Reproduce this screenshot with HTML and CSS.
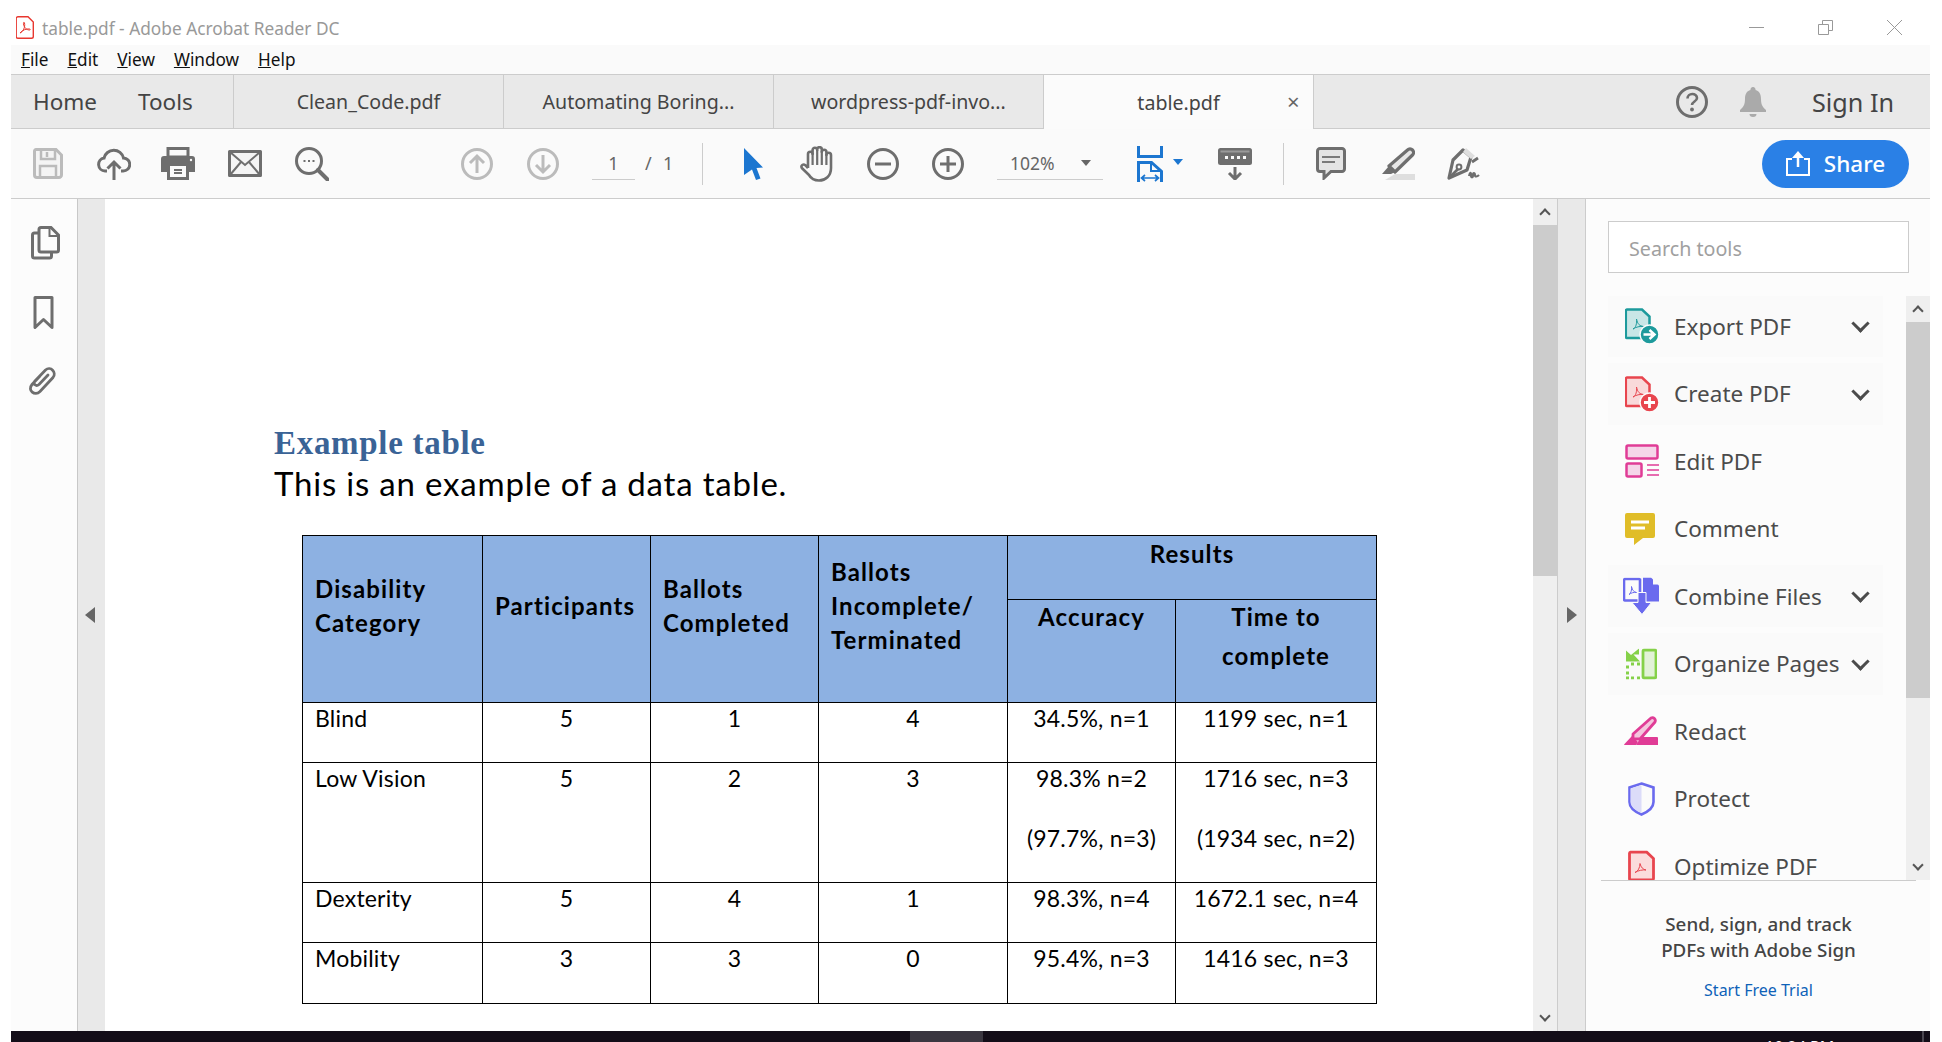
FILE: index.html
```html
<!DOCTYPE html>
<html lang="en">
<head>
  <meta charset="UTF-8">
  <title>table.pdf - Adobe Acrobat Reader DC</title>
  <link rel="stylesheet" href="styles.css">
</head>
<body>
<div class="app">

  <div class="titlebar">
    <svg class="pdf-icon" width="18" height="23" viewBox="0 0 18 23"><path d="M2 .7h10l5.3 5.3v14.5a1.8 1.8 0 0 1-1.8 1.8h-13.5a1.8 1.8 0 0 1-1.8-1.8v-18a1.8 1.8 0 0 1 1.8-1.8z" fill="#fff" stroke="#e8372f" stroke-width="1.4"/><path d="M4 17c3-1 5.5-6 4.5-10-.5-1.5-1.2-.5-1 1 .5 3.5 3 6 6 6 1 0 1-1 0-1-3-.5-7 1-9.5 4z" fill="none" stroke="#e8372f"/></svg>
    <span class="title-text">table.pdf - Adobe Acrobat Reader DC</span>
    <div class="win-btns">
      <svg width="15" height="15" viewBox="0 0 15 15"><path d="M0 7.5h15" stroke="#999" fill="none"/></svg>
      <svg width="15" height="15" viewBox="0 0 15 15"><path d="M.5 4.5h10v10h-10zM4.5 4.5v-4h10v10h-4" stroke="#999" fill="none"/></svg>
      <svg width="15" height="15" viewBox="0 0 15 15"><path d="M0 0l15 15M15 0L0 15" stroke="#999" fill="none"/></svg>
    </div>
  </div>

  <div class="menubar">
    <span><u>F</u>ile</span>
    <span><u>E</u>dit</span>
    <span><u>V</u>iew</span>
    <span><u>W</u>indow</span>
    <span><u>H</u>elp</span>
  </div>

  <div class="tabs">
    <div class="nav">
      <span>Home</span>
      <span>Tools</span>
    </div>
    <div class="tab">Clean_Code.pdf</div>
    <div class="tab">Automating Boring...</div>
    <div class="tab">wordpress-pdf-invo...</div>
    <div class="tab active">table.pdf<span class="tab-close">×</span></div>
    <div class="tabs-right">
      <svg width="32" height="32" viewBox="0 0 32 32"><circle cx="16" cy="16" r="14.5" fill="none" stroke="#6e6e6e" stroke-width="3"/><path d="M11.5 12.5c0-6 9.5-6 9.5-.5 0 3.5-5 3.5-5 7" fill="none" stroke="#6e6e6e" stroke-width="2.6"/><circle cx="16" cy="23.5" r="1.9" fill="#6e6e6e"/></svg>
      <svg class="bell" width="26" height="30" viewBox="0 0 26 30"><path d="M13 0a2.5 2.5 0 0 1 2.5 3c4 1 5.5 4.5 5.5 9 0 6 2 8.5 5 11v2H0v-2c3-2.5 5-5 5-11 0-4.5 1.5-8 5.5-9A2.5 2.5 0 0 1 13 0z" fill="#aaa"/><path d="M9.5 27h7a3.5 3 0 0 1-7 0z" fill="#aaa"/></svg>
      <span class="signin">Sign In</span>
    </div>
  </div>

  <div class="toolbar">
    <!-- save -->
    <svg width="30" height="31" viewBox="0 0 30 31"><path d="M3 1.5h20l5.5 5.5v20a2.5 2.5 0 0 1-2.5 2.5H4a2.5 2.5 0 0 1-2.5-2.5V3A1.5 1.5 0 0 1 3 1.5z" fill="#f4f4f4" stroke="#bbb" stroke-width="3"/><path d="M8 2v9h14V2M14 4v5M7 29V18h16v11" fill="none" stroke="#bbb" stroke-width="2.5"/></svg>
    <!-- upload to cloud -->
    <svg width="34" height="33" viewBox="0 0 34 33"><path d="M10 24H8A6.5 6.5 0 0 1 7 11.1 10 10 0 0 1 26.5 11 6.5 6.5 0 0 1 26 24h-2" fill="none" stroke="#6e6e6e" stroke-width="3"/><path d="M17 33V15M10.5 21.5L17 15l6.5 6.5" fill="none" stroke="#6e6e6e" stroke-width="3"/></svg>
    <!-- print -->
    <svg width="34" height="33" viewBox="0 0 34 33"><path d="M7 1.5h20V10H7z" fill="none" stroke="#6e6e6e" stroke-width="3"/><path d="M3 9h28a3 3 0 0 1 3 3v13h-6v8H6v-8H0V12a3 3 0 0 1 3-3z" fill="#6e6e6e"/><path d="M9 19h16v11H9z" fill="#fafafa"/><path d="M13 23h8M13 26h8" stroke="#6e6e6e" stroke-width="2"/><circle cx="30" cy="13" r="1.2" fill="#fafafa"/></svg>
    <!-- mail -->
    <svg width="34" height="27" viewBox="0 0 34 27"><path d="M1.5 1.5h31v24h-31z" fill="#f4f4f4" stroke="#6e6e6e" stroke-width="3" stroke-linejoin="round"/><path d="M2 2l15 13L32 2M2 25l11-13M32 25L21 12" fill="none" stroke="#6e6e6e" stroke-width="2"/></svg>
    <!-- search -->
    <svg width="34" height="34" viewBox="0 0 34 34"><circle cx="14" cy="14" r="12.5" fill="none" stroke="#6e6e6e" stroke-width="3"/><path d="M23 23l9.5 9.5" stroke="#6e6e6e" stroke-width="4" stroke-linecap="round"/><path d="M8.5 14h2M13 14h2M17.5 14h2" stroke="#6e6e6e" stroke-width="2"/></svg>
    <span></span>
    <!-- previous page -->
    <svg width="32" height="32" viewBox="0 0 32 32"><circle cx="16" cy="16" r="14.5" fill="none" stroke="#bbb" stroke-width="3"/><path d="M16 25V8M9 15l7-7 7 7" fill="none" stroke="#bbb" stroke-width="3"/></svg>
    <!-- next page -->
    <svg width="32" height="32" viewBox="0 0 32 32"><circle cx="16" cy="16" r="14.5" fill="none" stroke="#bbb" stroke-width="3"/><path d="M16 7v17M9 17l7 7 7-7" fill="none" stroke="#bbb" stroke-width="3"/></svg>

    <div class="pager">
      <span class="page-input">1</span>
      <span class="page-total">/ &nbsp;1</span>
    </div>
    <span class="tb-sep"></span>

    <!-- select -->
    <svg class="tb-select" width="20" height="32" viewBox="0 0 20 32"><path d="M0 0l19 19.5-6.5.5 4 10.5-4.5 1.5-4-10.5L0 27z" fill="#1c76d0"/></svg>
    <!-- hand -->
    <svg width="34" height="36" viewBox="0 0 34 36"><path d="M8 22V8a2.3 2.3 0 0 1 4.6 0V4a2.3 2.3 0 0 1 4.6 0v-.5a2.3 2.3 0 0 1 4.6 0V6a2.3 2.3 0 0 1 4.6 0V9a2.3 2.3 0 0 1 4.6 0v13c0 8-5.5 12.5-12 12.5-5 0-8-2-10-5.5L1.8 22c-1.3-2.5 1.500-4.500 3.500-2.800L8 22" fill="none" stroke="#6e6e6e" stroke-width="2.6" stroke-linejoin="round"/><path d="M12.6 7v12M17.2 4v15M21.8 5v14M26.4 8v11" fill="none" stroke="#6e6e6e" stroke-width="2.2"/></svg>
    <!-- zoom out -->
    <svg width="32" height="32" viewBox="0 0 32 32"><circle cx="16" cy="16" r="14.5" fill="none" stroke="#6e6e6e" stroke-width="3"/><path d="M8 16h16" stroke="#6e6e6e" stroke-width="3"/></svg>
    <!-- zoom in -->
    <svg width="32" height="32" viewBox="0 0 32 32"><circle cx="16" cy="16" r="14.5" fill="none" stroke="#6e6e6e" stroke-width="3"/><path d="M8 16h16M16 8v16" stroke="#6e6e6e" stroke-width="3"/></svg>

    <div class="zoom-box">
      <span>102%</span>
      <i class="caret"></i>
    </div>

    <!-- fit width -->
    <div class="fit">
      <svg width="26" height="36" viewBox="0 0 26 36"><path d="M1.5 0v10.5h23V0M1.5 36V16.5h13l10 9V36" fill="none" stroke="#1c76d0" stroke-width="3"/><path d="M14 16v9h10" fill="none" stroke="#1c76d0" stroke-width="2"/><path d="M5 32h16M8 29l-3.5 3L8 35M18 29l3.5 3-3.5 3" fill="none" stroke="#1c76d0" stroke-width="1.7"/></svg>
      <i class="caret blue"></i>
    </div>

    <!-- read mode -->
    <svg width="34" height="32" viewBox="0 0 34 32"><rect y="0" width="34" height="17" rx="2.5" fill="#6e6e6e"/><path d="M2.5 2.5h29v2h-29z" fill="#9a9a9a"/><path d="M7 8h3v3H7zM13 8h3v3h-3zM19 8h3v3h-3zM25 8h3v3h-3z" fill="#fafafa"/><path d="M17 19v12M11 25l6 6 6-6" fill="none" stroke="#6e6e6e" stroke-width="3"/></svg>
    <span class="tb-sep"></span>

    <!-- comment -->
    <svg width="30" height="33" viewBox="0 0 30 33"><path d="M4 1.5h22a2.5 2.5 0 0 1 2.5 2.5v18a2.5 2.5 0 0 1-2.5 2.5H15L8 31v-6.5H4A2.5 2.5 0 0 1 1.5 22V4A2.5 2.5 0 0 1 4 1.5z" fill="#e4e4e4" stroke="#6e6e6e" stroke-width="3"/><path d="M6 10h18M6 15h13" stroke="#7a7a7a" stroke-width="1.8"/></svg>
    <!-- highlight -->
    <svg width="34" height="33" viewBox="0 0 34 33"><path d="M26.5 3a3.5 3.5 0 0 1 5 5L14 25l-6-6z" fill="#e6e6e6" stroke="#6e6e6e" stroke-width="3.2" stroke-linejoin="round"/><path d="M8 19l-7 8h9l4-2" fill="#6e6e6e"/><path d="M14 27h20v6H4z" fill="#dedede"/></svg>
    <!-- sign -->
    <svg width="34" height="33" viewBox="0 0 34 33"><path d="M16 3l8 7-4 13L2 31l4-18z" fill="none" stroke="#6e6e6e" stroke-width="3.2" stroke-linejoin="round"/><path d="M19 1l9 8-4 3-8-7z" fill="#dedede"/><path d="M3 30l8-8M25 15l6-4" stroke="#6e6e6e" stroke-width="2.8"/><circle cx="12" cy="20" r="2.4" fill="none" stroke="#6e6e6e" stroke-width="2"/><path d="M22 29c1-4 2-4 2-1s2 3 2 0 2-2 2 0 2 2 4 0" fill="none" stroke="#6e6e6e" stroke-width="2.2"/></svg>

    <button class="share">
      <svg width="24" height="25" viewBox="0 0 24 25"><path d="M6 8H1v16h22V8h-5" fill="none" stroke="#fff" stroke-width="2"/><path d="M12 16V3" stroke="#fff" stroke-width="2.5"/><path d="M6 7l6-7 6 7z" fill="#fff"/></svg>
      <span>Share</span>
    </button>
  </div>

  <div class="main">
    <div class="side-icons">
      <svg class="side-pages" width="29" height="34" viewBox="0 0 29 34"><path d="M8 7H3.5A2 2 0 0 0 1.5 9v21a2 2 0 0 0 2 2h15a2 2 0 0 0 2-2v-3" fill="none" stroke="#6e6e6e" stroke-width="3"/><path d="M10 1.5h10l7.5 7.5v15a2 2 0 0 1-2 2H10a2 2 0 0 1-2-2V3.5a2 2 0 0 1 2-2z" fill="#fcfcfc" stroke="#6e6e6e" stroke-width="3"/><path d="M18.5 2v8h8.5" fill="none" stroke="#6e6e6e" stroke-width="2"/></svg>
      <svg class="side-bookmark" width="21" height="34" viewBox="0 0 21 34"><path d="M2 1.5h17v30l-8.5-8-8.500 8z" fill="none" stroke="#6e6e6e" stroke-width="3" stroke-linejoin="round"/></svg>
      <svg class="side-clip" width="29" height="31" viewBox="0 0 29 31"><path d="M13 11L5 19.5c-5 6 3 12 8 7L26 12.5c4-5-2.5-12-7.5-7.5L8 16c-2.5 3 1 6 4 3.5l9-9.5" fill="none" stroke="#6e6e6e" stroke-width="2.8" stroke-linecap="round"/></svg>
    </div>

    <div class="strip">
      <i class="arrow-left"></i>
    </div>

    <div class="page">
      <h1>Example table</h1>
      <p class="intro">This is an example of a data table.</p>
      <table class="data">
        <colgroup>
          <col class="c1"><col class="c2"><col class="c3"><col class="c4"><col class="c5"><col class="c6">
        </colgroup>
        <tr class="head-a">
          <th rowspan="2" class="side">Disability<br>Category</th>
          <th rowspan="2" class="side">Participants</th>
          <th rowspan="2" class="side">Ballots<br>Completed</th>
          <th rowspan="2" class="side">Ballots<br>Incomplete/<br>Terminated</th>
          <th colspan="2" class="results">Results</th>
        </tr>
        <tr class="head-b">
          <th>Accuracy</th>
          <th>Time to<div class="line2">complete</div></th>
        </tr>
        <tr class="r60">
          <td class="left">Blind</td><td>5</td><td>1</td><td>4</td><td>34.5%, n=1</td><td>1199 sec, n=1</td>
        </tr>
        <tr class="r120">
          <td class="left">Low Vision</td><td>5</td><td>2</td><td>3</td>
          <td>98.3% n=2<div class="para">(97.7%, n=3)</div></td>
          <td>1716 sec, n=3<div class="para">(1934 sec, n=2)</div></td>
        </tr>
        <tr class="r60">
          <td class="left">Dexterity</td><td>5</td><td>4</td><td>1</td><td>98.3%, n=4</td><td>1672.1 sec, n=4</td>
        </tr>
        <tr class="r61">
          <td class="left">Mobility</td><td>3</td><td>3</td><td>0</td><td>95.4%, n=3</td><td>1416 sec, n=3</td>
        </tr>
      </table>
    </div>

    <div class="scroll doc-scroll">
      <div class="sb-btn"><i class="chev up"></i></div>
      <div class="sb-thumb doc-thumb"></div>
      <div class="sb-btn sb-end"><i class="chev down"></i></div>
    </div>

    <div class="strip strip-right">
      <i class="arrow-right"></i>
    </div>

    <div class="panel">
      <div class="search">Search tools</div>

      <div class="list-wrap">
        <div class="tool-list">
          <div class="tool menu">
            <svg width="34" height="36" viewBox="0 0 34 36"><path d="M2 1.5h15l7.5 7v20a1.5 1.5 0 0 1-1.5 1.5H2A1.5 1.5 0 0 1 .8 28.5V3A1.5 1.5 0 0 1 2 1.5z" fill="#c9e6e6" stroke="#1d9a9c" stroke-width="2.5"/><path d="M8 21c3-1 4-6 3.5-10 1 5 3 7 7 7.5-3-.5-8 .5-10.5 2.5z" fill="none" stroke="#1d9a9c"/><circle cx="24.5" cy="26.5" r="9.5" fill="#1d9a9c" stroke="#fbfbfb" stroke-width="1.5"/><path d="M18.5 26.5h9M24.5 22l5 4.5-5 4.5" fill="none" stroke="#fff" stroke-width="2.5"/></svg>
            <span>Export PDF</span><i class="chevron"></i>
          </div>
          <div class="tool menu">
            <svg width="34" height="36" viewBox="0 0 34 36"><path d="M2 1.5h15l7.5 7v20a1.5 1.5 0 0 1-1.5 1.5H2A1.5 1.5 0 0 1 .8 28.5V3A1.5 1.5 0 0 1 2 1.5z" fill="#f9d9da" stroke="#e8454e" stroke-width="2.5"/><path d="M8 21c3-1 4-6 3.5-10 1 5 3 7 7 7.5-3-.5-8 .5-10.5 2.5z" fill="none" stroke="#e8454e"/><circle cx="24.5" cy="26.5" r="9.5" fill="#e8454e" stroke="#fbfbfb" stroke-width="1.5"/><path d="M19 26.5h11M24.5 21v11" fill="none" stroke="#fff" stroke-width="2.8"/></svg>
            <span>Create PDF</span><i class="chevron"></i>
          </div>
          <div class="tool">
            <svg width="34" height="34" viewBox="0 0 34 34"><rect x="1.5" y="1.5" width="31" height="13" rx="1.5" fill="#f5d5e9" stroke="#e03c96" stroke-width="2.5"/><rect x="1.5" y="19.5" width="15" height="13" rx="1.5" fill="#f5d5e9" stroke="#e03c96" stroke-width="2.5"/><path d="M22 21h12M22 26h12M22 31h12" stroke="#e03c96" stroke-width="1.6"/></svg>
            <span>Edit PDF</span>
          </div>
          <div class="tool">
            <svg width="30" height="32" viewBox="0 0 30 32"><path d="M2 0h26a2 2 0 0 1 2 2v21a2 2 0 0 1-2 2H18L9 32v-7H2a2 2 0 0 1-2-2V2a2 2 0 0 1 2-2z" fill="#e0bd28"/><path d="M6 9h18M6 15h14" stroke="#fff" stroke-width="2.8"/></svg>
            <span>Comment</span>
          </div>
          <div class="tool menu">
            <svg class="ic-wide" width="36" height="37" viewBox="0 0 36 37"><path d="M2 1.5h14l1 .5v21H2a1.2 1.2 0 0 1-1-1.5V3a1.5 1.5 0 0 1 1-1.5z" fill="#fbfbfb" stroke="#6a6aee" stroke-width="2.6"/><path d="M20 0h8l8 8v16H20z" fill="#6a6aee"/><path d="M30 0v7h6" fill="#fbfbfb"/><path d="M6 17c2-1 3-5 2.5-8 1 4 2 5 5 6-3-.5-5.5.5-7.5 2z" fill="none" stroke="#6a6aee"/><path d="M15 15h8v10h5.5L19 37 9 25h6z" fill="#6a6aee" stroke="#fbfbfb"/></svg>
            <span>Combine Files</span><i class="chevron"></i>
          </div>
          <div class="tool menu">
            <svg width="32" height="31" viewBox="0 0 32 31"><rect x="18" y="1.5" width="13" height="28" rx="1.5" fill="#e2f2d8" stroke="#85d149" stroke-width="2.8"/><path d="M14 0v6H8.5L15 13H1V2l5 4.5z" fill="#85d149"/><path d="M1 17h3v3H1zM1 23h3v3H1zM1 28h3v3H1zM6 28h3v3H6zM12 28h3v3h-3zM6 14h3v3H6zM12 14h3v3h-3z" fill="#85d149"/></svg>
            <span>Organize Pages</span><i class="chevron"></i>
          </div>
          <div class="tool">
            <svg class="ic-redact" width="34" height="30" viewBox="0 0 34 30"><path d="M27 2a3 3 0 0 1 4 4L16 23H9v-5z" fill="#f4c6de" stroke="#e03c96" stroke-width="2.8" stroke-linejoin="round"/><path d="M8 20l-8 8.5 .5 .5H12l2-3z" fill="#e03c96"/><path d="M17 21h16a1 1 0 0 1 1 1v7H12z" fill="#e03c96"/></svg>
            <span>Redact</span>
          </div>
          <div class="tool">
            <svg class="ic-shield" width="27" height="34" viewBox="0 0 27 34"><path d="M13.5 1.5l12 4V20c0 6-6 10-12 12.5C7.5 30 1.5 26 1.5 20V5.5z" fill="#fbfbfb" stroke="#6a6aee" stroke-width="2.6"/><path d="M13.5 3v28c-5-2-11-6-11-11V6.5z" fill="#dcdcf9"/></svg>
            <span>Protect</span>
          </div>
          <div class="tool">
            <svg class="ic-shield" width="27" height="31" viewBox="0 0 27 31"><path d="M2.5 1.5h16l7 6.5v20a1.5 1.5 0 0 1-1.5 1.5H2.5A1.5 1.5 0 0 1 1.5 28V3a1.5 1.5 0 0 1 1-1.5z" fill="#fbdcdc" stroke="#e8454e" stroke-width="2.8"/><path d="M7 22c3-1 5-5 5-9 1 4 3 6 6 6.5-3-.5-8 .5-11 2.5z" fill="none" stroke="#e8454e"/></svg>
            <span>Optimize PDF</span>
          </div>
        </div>
        <div class="scroll panel-scroll">
          <div class="sb-btn"><i class="chev up"></i></div>
          <div class="sb-thumb panel-thumb"></div>
          <div class="sb-btn sb-end"><i class="chev down"></i></div>
        </div>
      </div>

      <div class="promo">
        <p>Send, sign, and track<br>PDFs with Adobe Sign</p>
        <a>Start Free Trial</a>
      </div>
    </div>
  </div>

  <div class="taskbar">
    <span class="task-active"></span>
    <span class="clock">10:24 PM</span>
    <span class="task-edge"></span>
  </div>
</div>
</body>
</html>
```

FILE: styles.css
```css
html, body {
  margin: 0;
  padding: 0;
  background: #fff;
  overflow: hidden;
}

body {
  font-family: "Noto Sans", "Open Sans", sans-serif;
  color: #4b4b4b;
}

.app {
  width: 1919px;
  height: 1042px;
  margin-left: 11px;
  display: flex;
  flex-direction: column;
}

svg {
  display: block;
  flex: none;
}

/* title + menu */
.titlebar {
  height: 45px;
  padding-top: 10px;
  box-sizing: border-box;
  display: flex;
  align-items: center;
  background: #fff;
}

.pdf-icon {
  margin: 0 8px 0 5px;
}

.title-text {
  font-size: 17.3px;
  color: #999;
  margin-top: 2px;
}

.win-btns {
  margin-left: auto;
  margin-right: 28px;
  display: flex;
  gap: 54px;
}

.menubar {
  height: 29px;
  background: #fafafa;
  display: flex;
  align-items: center;
  padding-left: 10px;
  font-size: 17.2px;
  color: #111;
}

.menubar span {
  margin-right: 19px;
}

/* tabs */
.tabs {
  height: 53px;
  display: flex;
  background: #e9e9e9;
  border-top: 1px solid #ccc;
  border-bottom: 1px solid #ccc;
  font-size: 19.6px;
  color: #444;
}

.nav {
  width: 223px;
  display: flex;
  align-items: center;
  gap: 41px;
  padding-left: 22px;
  box-sizing: border-box;
  border-right: 1px solid #ccc;
  font-size: 22.5px;
}

.tab {
  width: 270px;
  display: flex;
  align-items: center;
  justify-content: center;
  box-sizing: border-box;
  border-right: 1px solid #ccc;
}

.tab.active {
  position: relative;
  height: 54px;
  background: #fbfbfb;
}

.tab-close {
  position: absolute;
  left: 243px;
  top: 12px;
  font-size: 22px;
  line-height: 28px;
  color: #666;
}

.tabs-right {
  margin-left: auto;
  display: flex;
  align-items: center;
  padding-right: 36px;
}

.bell {
  margin-left: 32px;
}

.signin {
  margin-left: 46px;
  font-size: 25.2px;
}

/* toolbar */
.toolbar {
  height: 70px;
  background: #fafafa;
  border-bottom: 1px solid #ccc;
  display: grid;
  grid-template-columns: 74px 58px 70px 64px 70px 96px 68px 63px 117px 22px 78px 52px 80px 50px 152px 70px 80px 16px 80px 54px 78px 1fr;
  align-items: center;
  justify-items: center;
  box-sizing: border-box;
}

.tb-select {
  margin-left: 4px;
}

.pager {
  justify-self: start;
  display: flex;
  margin-left: 18px;
  font-size: 18px;
  color: #666;
}

.page-input {
  width: 43px;
  height: 32px;
  line-height: 30px;
  text-align: center;
  border-bottom: 1px solid #ccc;
  box-sizing: border-box;
}

.page-total {
  margin-left: 10px;
  line-height: 30px;
  word-spacing: 1px;
}

.tb-sep {
  width: 1px;
  height: 42px;
  background: #ccc;
}

.zoom-box {
  justify-self: start;
  margin-left: 24px;
  width: 106px;
  height: 32px;
  display: flex;
  align-items: center;
  padding-left: 13px;
  box-sizing: border-box;
  border-bottom: 1px solid #ccc;
  font-size: 17.5px;
  color: #666;
}

.caret {
  display: block;
  width: 0;
  height: 0;
  border-left: 5.5px solid transparent;
  border-right: 5.5px solid transparent;
  border-top: 6px solid #666;
}

.zoom-box .caret {
  margin-left: 26px;
}

.caret.blue {
  border-top-color: #1c76d0;
  margin: 0 0 4px 10px;
}

.fit {
  display: flex;
  align-items: center;
}

.share {
  justify-self: end;
  margin-right: 21px;
  width: 147px;
  height: 48px;
  border: 0;
  border-radius: 24px;
  background: #2a80e6;
  color: #fff;
  display: flex;
  align-items: center;
  justify-content: center;
  gap: 14px;
  font-family: inherit;
  font-size: 22.5px;
  font-weight: 500;
}

/* main area */
.main {
  flex: 1;
  display: flex;
  min-height: 0;
}

.side-icons {
  width: 66px;
  background: #fcfcfc;
  border-right: 1px solid #c8c8c8;
  display: flex;
  flex-direction: column;
  align-items: center;
  padding-top: 27px;
  flex: none;
}

.side-pages {
  margin-left: 2px;
}

.side-bookmark {
  margin: 36px 2px 0 0;
}

.side-clip {
  margin: 35px 5px 0 0;
}

.strip {
  width: 27px;
  background: #e9e9e9;
  display: flex;
  align-items: center;
  justify-content: center;
  flex: none;
}

.strip-right {
  border-left: 1px solid #ccc;
  border-right: 1px solid #ccc;
}

.arrow-left,
.arrow-right {
  display: block;
  width: 0;
  height: 0;
  border-top: 8px solid transparent;
  border-bottom: 8px solid transparent;
}

.arrow-left {
  border-right: 10px solid #666;
  margin-right: 4px;
}

.arrow-right {
  border-left: 10px solid #666;
}

.page {
  flex: 1;
  min-width: 0;
  background: #fff;
  padding: 226px 0 0 169px;
  box-sizing: border-box;
  overflow: hidden;
  color: #000;
  font-family: Lato, "Liberation Sans", sans-serif;
}

.page h1 {
  margin: 0;
  font-family: "Liberation Serif", serif;
  font-size: 33px;
  line-height: 36px;
  font-weight: bold;
  letter-spacing: .7px;
  color: #3a6396;
}

.intro {
  margin: 2px 0 0;
  font-size: 33px;
  line-height: 40px;
  letter-spacing: .8px;
}

/* the table */
.data {
  border-collapse: collapse;
  table-layout: fixed;
  width: 1074px;
  margin: 32px 0 0 28px;
  font-size: 23px;
  line-height: 31px;
  letter-spacing: .2px;
}

.c1 { width: 180px; }
.c2 { width: 168px; }
.c3 { width: 168px; }
.c4 { width: 189px; }
.c5 { width: 168px; }
.c6 { width: 201px; }

.data th,
.data td {
  border: 1px solid #000;
  padding: 0;
  vertical-align: top;
  text-align: center;
}

.data th {
  background: #8db1e2;
  font-size: 24px;
  line-height: 34px;
  font-weight: bold;
  letter-spacing: 1.1px;
}

.data th.side {
  text-align: left;
  vertical-align: middle;
  padding: 0 0 26px 12px;
}

.data th.results {
  padding-top: 1px;
}

.head-a {
  height: 64px;
}

.head-b {
  height: 103px;
}

.line2 {
  margin-top: 5px;
}

.r60 {
  height: 60px;
}

.r61 {
  height: 61px;
}

.r120 {
  height: 120px;
}

.data td.left {
  text-align: left;
  padding-left: 12px;
}

.para {
  margin-top: 29px;
}

/* scrollbars */
.scroll {
  width: 24px;
  background: #efefef;
  display: flex;
  flex-direction: column;
  flex: none;
}

.sb-btn {
  height: 26px;
  display: flex;
  align-items: center;
  justify-content: center;
}

.sb-end {
  margin-top: auto;
}

.sb-thumb {
  background: #ccc;
}

.doc-thumb {
  height: 351px;
}

.panel-thumb {
  height: 376px;
}

.chev {
  display: block;
  width: 8px;
  height: 8px;
  border-top: 2px solid #555;
  border-left: 2px solid #555;
  box-sizing: border-box;
}

.chev.up {
  transform: translateY(2px) rotate(45deg);
}

.chev.down {
  transform: translateY(-2px) rotate(225deg);
}

/* tools panel */
.panel {
  width: 344px;
  flex: none;
  background: #fcfcfc;
  display: flex;
  flex-direction: column;
  padding-top: 22px;
  box-sizing: border-box;
}

.search {
  width: 301px;
  height: 52px;
  margin-left: 22px;
  padding-left: 20px;
  box-sizing: border-box;
  background: #fff;
  border: 1px solid #ccc;
  line-height: 54px;
  font-size: 19.7px;
  color: #a0a0a0;
}

.list-wrap {
  margin-top: 23px;
  height: 584px;
  display: flex;
  justify-content: space-between;
}

.tool-list {
  overflow: hidden;
  width: 320px;
}

.tool {
  height: 62px;
  width: 275px;
  margin: 0 0 5.5px 22px;
  display: flex;
  align-items: center;
  font-size: 22.5px;
  color: #4b4b4b;
  padding-left: 18px;
  box-sizing: border-box;
  position: relative;
  top: -1px;
}

.tool svg {
  position: absolute;
  left: 17px;
  top: 50%;
  transform: translateY(-50%);
}

.tool .ic-wide {
  left: 15px;
}

.tool .ic-redact {
  left: 16px;
}

.tool .ic-shield {
  left: 20px;
}

.tool span {
  margin-left: 48px;
}

.tool.menu {
  background: #fafafa;
}

.chevron {
  position: absolute;
  left: 246px;
  top: 22px;
  width: 13px;
  height: 13px;
  border-right: 3px solid #4b4b4b;
  border-bottom: 3px solid #4b4b4b;
  box-sizing: border-box;
  transform: rotate(45deg);
}

.promo {
  flex: 1;
  margin: 0 14px 0 15px;
  border-top: 1px solid #ccc;
  text-align: center;
  font-size: 18.8px;
}

.promo p {
  margin: 30px 0 0;
  line-height: 26px;
  font-weight: 500;
  color: #444;
}

.promo a {
  display: block;
  margin-top: 16px;
  font-size: 16px;
  color: #0e62b8;
}

/* bit of the taskbar at the bottom */
.taskbar {
  height: 11px;
  background: #130d18;
  display: flex;
  overflow: hidden;
}

.task-active {
  width: 73px;
  margin-left: 899px;
  background: #3a3640;
}

.clock {
  margin: 8px 0 0 782px;
  font-size: 16px;
  line-height: 16px;
  color: #fff;
  white-space: nowrap;
}

.task-edge {
  width: 2px;
  margin-left: auto;
  margin-right: 6px;
  background: #4a4650;
}
```
